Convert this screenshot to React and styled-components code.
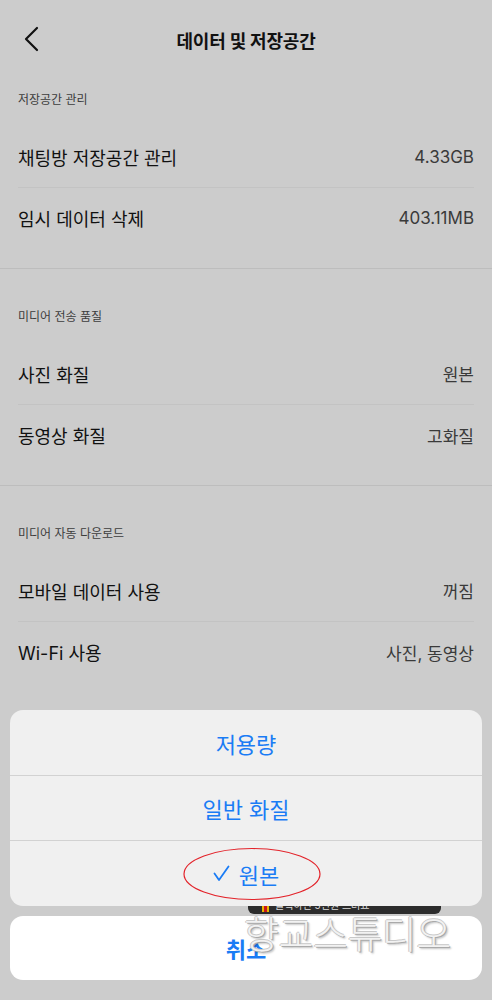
import React from "react";
import styled, { createGlobalStyle } from "styled-components";

const GlobalStyle = createGlobalStyle`
    body {
        margin: 0;
        background: #cccccc;
        font-family: "Inter", "Noto Sans CJK KR", sans-serif;
    }
`;

const Screen = styled.div`
    position: relative;
    width: 492px;
    height: 1000px;
    overflow: hidden;
    background: #cccccc;
    color: #111111;
`;

const Header = styled.header`
    height: 52px;
    display: flex;
    align-items: center;
    justify-content: center;
    position: relative;
`;

const BackButton = styled.button`
    position: absolute;
    left: 18px;
    top: 22px;
    width: 28px;
    height: 34px;
    padding: 0;
    border: 0;
    background: none;
`;

const Title = styled.h1`
    margin: 0;
    margin-top: 28px;
    font-size: 18px;
    font-weight: 700;
    letter-spacing: -0.2px;
`;

const Section = styled.section`
    padding-bottom: 20px;
    border-bottom: ${(p) => (p.last ? "none" : "1px solid #bdbdbd")};
`;

const SectionTitle = styled.div`
    padding: 36px 18px 0;
    margin-bottom: 14px;
    line-height: 24px;
    font-size: 12px;
    color: #3c3c3c;
`;

const Row = styled.div`
    height: 61px;
    margin: 0 18px;
    display: flex;
    align-items: center;
    justify-content: space-between;
    border-top: ${(p) => (p.first ? "none" : "1px solid #c3c3c3")};
    box-sizing: border-box;
`;

const Label = styled.span`
    font-size: 18px;
    color: #111111;
`;

const Value = styled.span`
    font-size: 17px;
    color: #3a3a3a;
`;

const Sheet = styled.div`
    position: absolute;
    left: 10px;
    right: 10px;
    top: 710px;
    display: flex;
    flex-direction: column;
    gap: 10px;
`;

const Options = styled.div`
    position: relative;
    z-index: 2;
    background: #f0f0f0;
    border-radius: 13px;
    overflow: hidden;
`;

const Option = styled.div`
    height: ${(p) => (p.last ? "66px" : "65px")};
    display: flex;
    align-items: center;
    justify-content: center;
    gap: 9px;
    font-size: 22px;
    color: #1a7cf5;
    border-top: ${(p) => (p.first ? "none" : "1px solid #d2d2d2")};
    box-sizing: border-box;
    position: relative;
`;

const Cancel = styled.div`
    position: relative;
    z-index: 2;
    height: 64px;
    background: #ffffff;
    border-radius: 13px;
    display: flex;
    align-items: center;
    justify-content: center;
    font-size: 22px;
    font-weight: 700;
    color: #1a7cf5;
`;

const Circle = styled.svg`
    position: absolute;
    left: 172px;
    top: 5px;
    width: 140px;
    height: 56px;
    pointer-events: none;
`;

const Banner = styled.div`
    position: absolute;
    z-index: 1;
    left: 248px;
    top: 892px;
    width: 193px;
    height: 22px;
    background: #2c2c2c;
    border-radius: 0 0 6px 6px;
    display: flex;
    align-items: flex-end;
    gap: 6px;
    padding: 0 10px 2px 14px;
    box-sizing: border-box;
    font-size: 10px;
    color: #dddddd;
    white-space: nowrap;
`;

const Flag = styled.span`
    width: 7px;
    height: 10px;
    background: linear-gradient(90deg, #e8b400 0 35%, #c8141e 35% 65%, #e8b400 65%);
`;

const Watermark = styled.div`
    position: absolute;
    z-index: 3;
    left: 244px;
    top: 909px;
    font-size: 38px;
    line-height: 50px;
    font-weight: 300;
    letter-spacing: -0.5px;
    white-space: nowrap;
    color: #f2f2f2;
    text-shadow: 1px 1px 0 #a9a9a9, -1px 0 0 #c8c8c8, 0 -1px 0 #c8c8c8, 2px 2px 2px rgba(0, 0, 0, 0.25);
    pointer-events: none;
`;

const sections = [
    {
        title: "저장공간 관리",
        rows: [
            ["채팅방 저장공간 관리", "4.33GB"],
            ["임시 데이터 삭제", "403.11MB"],
        ],
    },
    {
        title: "미디어 전송 품질",
        rows: [
            ["사진 화질", "원본"],
            ["동영상 화질", "고화질"],
        ],
    },
    {
        title: "미디어 자동 다운로드",
        rows: [
            ["모바일 데이터 사용", "꺼짐"],
            ["Wi-Fi 사용", "사진, 동영상"],
        ],
    },
];

export default function App() {
    return (
        <Screen>
            <GlobalStyle />
            <Header>
                <BackButton>
                    <svg width="28" height="34" viewBox="0 0 28 34">
                        <polyline points="19,6 8,17 19,28" fill="none" stroke="#111" strokeWidth="2.2" strokeLinecap="round" strokeLinejoin="round" />
                    </svg>
                </BackButton>
                <Title>데이터 및 저장공간</Title>
            </Header>

            {sections.map((s, i) => (
                <Section key={s.title} last={i === sections.length - 1}>
                    <SectionTitle>{s.title}</SectionTitle>
                    {s.rows.map(([label, value], j) => (
                        <Row key={label} first={j === 0}>
                            <Label>{label}</Label>
                            <Value>{value}</Value>
                        </Row>
                    ))}
                </Section>
            ))}

            <Banner>
                <Flag />
                <span>클릭하면 5천원 드려요</span>
                <span style={{ marginLeft: 12 }}>^</span>
            </Banner>

            <Sheet>
                <Options>
                    <Option first>저용량</Option>
                    <Option>일반 화질</Option>
                    <Option last>
                        <svg width="17" height="17" viewBox="0 0 17 17">
                            <polyline points="1.5,8.5 6,15 15.5,1.5" fill="none" stroke="#1a7cf5" strokeWidth="1.8" strokeLinecap="round" strokeLinejoin="round" />
                        </svg>
                        <span>원본</span>
                        <Circle viewBox="0 0 140 56">
                            <ellipse cx="70" cy="28" rx="68" ry="25.5" fill="none" stroke="#e3242b" strokeWidth="1.2" />
                        </Circle>
                    </Option>
                </Options>
                <Cancel>취소</Cancel>
            </Sheet>

            <Watermark>향교스튜디오</Watermark>
        </Screen>
    );
}
